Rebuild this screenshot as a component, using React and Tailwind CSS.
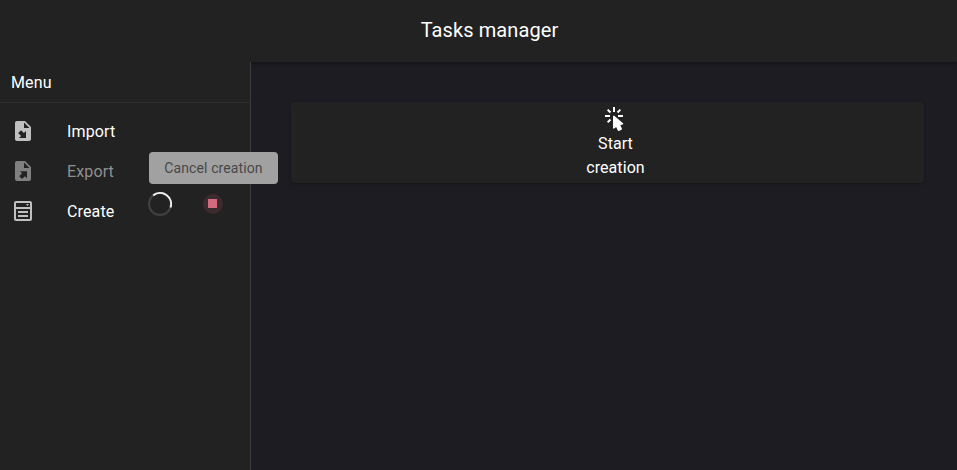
const ICONS = {
  fileImport:
    'M14,2H6C4.89,2 4,2.9 4,4V20C4,21.11 4.89,22 6,22H18C19.11,22 20,21.11 20,20V8L14,2M13,3.5L18.5,9H13V3.5M10.05,11.22L12.88,14.05L15,11.93V19H7.93L10.05,16.88L7.22,14.05L10.05,11.22Z',
  fileExport:
    'M6,2C4.89,2 4,2.9 4,4V20A2,2 0 0,0 6,22H18A2,2 0 0,0 20,20V8L14,2M13,3.5L18.5,9H13M8.93,12.22H16V19.29L13.88,17.17L11.05,20L8.22,17.17L11.05,14.34',
  form:
    'M5,2H19A2,2 0 0,1 21,4V20A2,2 0 0,1 19,22H5A2,2 0 0,1 3,20V4A2,2 0 0,1 5,2M5,4V8H19V4H5M5,10V20H19V10H5M15,5H18L16.5,7L15,5M7,12H17V14H7V12M7,16H17V18H7V16Z',
  click:
    'M10.76,8.69A0.76,0.76 0 0,0 10,9.45V20.9C10,21.32 10.34,21.66 10.76,21.66C10.95,21.66 11.11,21.6 11.24,21.5L13.15,19.95L14.81,23.57C14.94,23.84 15.21,24 15.5,24C15.61,24 15.72,24 15.83,23.92L18.59,22.64C18.97,22.46 19.15,22 18.95,21.63L17.28,18L19.69,17.55C19.85,17.5 20,17.43 20.12,17.29C20.39,16.97 20.35,16.5 20,16.21L11.26,8.86L11.25,8.87C11.12,8.76 10.95,8.69 10.76,8.69M15,10V8H20V10H15M13.83,4.76L16.66,1.93L18.07,3.34L15.24,6.17L13.83,4.76M10,0H12V5H10V0M3.93,14.66L6.76,11.83L8.17,13.24L5.34,16.07L3.93,14.66M3.93,3.34L5.34,1.93L8.17,4.76L6.76,6.17L3.93,3.34M7,10H2V8H7V10Z',
};

function Icon({ name, className }) {
  return (
    <svg viewBox="0 0 24 24" className={`size-6 shrink-0 ${className}`} fill="currentColor" fillRule="evenodd">
      <path d={ICONS[name]} />
    </svg>
  );
}

function MenuItem({ icon, label, disabled, children }) {
  return (
    <li className="flex h-10 items-center pl-[11px]">
      <Icon name={icon} className={disabled ? 'text-[#808080]' : 'text-[#c0c0c0]'} />
      <span className={`ml-8 w-[81px] pt-0.5 ${disabled ? 'text-[#909090]' : 'text-white'}`}>{label}</span>
      {children}
    </li>
  );
}

function CreationStatus() {
  return (
    <div className="relative -mt-3.5 flex items-center">
      <svg viewBox="0 0 24 24" className="size-6" fill="none" strokeWidth="2">
        <circle cx="12" cy="12" r="11" stroke="#414141" />
        <path d="M5.2,3.4A11,11 0 0,1 22.5,15.5" stroke="#f0f0f0" />
      </svg>
      <button aria-label="Cancel creation" className="ml-[31px] flex size-5 rounded-full bg-[#3c2b2e] pt-[5px] pl-[5px]">
        <span className="size-[9px] bg-[#d46a7e]" />
      </button>
      <div
        role="tooltip"
        className="absolute bottom-8 left-px flex h-8 w-[129px] items-center justify-center rounded bg-[#a1a1a1] text-sm font-normal tracking-[0.1px] whitespace-nowrap text-[#484848]"
      >
        Cancel creation
      </div>
    </div>
  );
}

export default function App() {
  return (
    <div className="flex h-screen flex-col overflow-hidden bg-[#1d1c22] font-['Roboto',sans-serif] text-base font-[450] tracking-[0.13px] text-white">
      <header className="z-10 flex h-[62px] shrink-0 items-center justify-center bg-[#222222] pb-0.5 pl-[22px] text-xl font-normal tracking-[0.1px] shadow-[0_2px_4px_rgba(0,0,0,0.3)]">
        <h1>Tasks manager</h1>
      </header>
      <div className="flex min-h-0 flex-1">
        <aside className="z-10 w-[251px] shrink-0 border-r border-[#3c3c3f] bg-[#222222]">
          <h2 className="flex h-[41px] items-center border-b border-[#2d2d2d] pt-0.5 pl-[11px] font-[450]">Menu</h2>
          <ul className="mt-2">
            <MenuItem icon="fileImport" label="Import" />
            <MenuItem icon="fileExport" label="Export" disabled />
            <MenuItem icon="form" label="Create">
              <CreationStatus />
            </MenuItem>
          </ul>
        </aside>
        <main className="flex-1 pt-10 pr-[33px] pl-10">
          <button className="flex h-[81px] w-full flex-col items-center rounded bg-[#222222] pt-[5px] pl-[15px] leading-6 shadow-[0_1px_3px_rgba(0,0,0,0.3)]">
            <Icon name="click" className="text-white" />
            <span className="w-[66px] pt-px pl-px tracking-[0.08px]">Start creation</span>
          </button>
        </main>
      </div>
    </div>
  );
}
